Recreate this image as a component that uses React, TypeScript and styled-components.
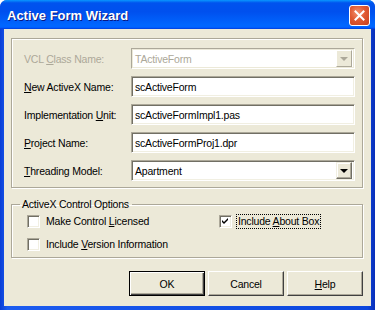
import React from "react";
import styled, { createGlobalStyle } from "styled-components";

const GlobalStyle = createGlobalStyle`
  html, body {
    margin: 0;
    padding: 0;
    background: #ffffff;
  }
  body {
    font-family: "Liberation Sans", Arial, sans-serif;
    font-size: 10.5px;
    letter-spacing: -0.2px;
    color: #000;
  }
`;

const Window = styled.div`
  width: 375px;
  height: 310px;
  display: flex;
  flex-direction: column;
  background: linear-gradient(to right, #0a3ed6 0%, #1c5cf0 2%, #0b46dd 98%, #0a2fb8 100%);
  border-radius: 7px 7px 0 0;
  overflow: hidden;
`;

const TitleBar = styled.div`
  height: 29px;
  flex: none;
  display: flex;
  align-items: center;
  justify-content: space-between;
  padding: 0 5px 0 7px;
  background: linear-gradient(
    to bottom,
    #0997ff 0%,
    #0053ee 10%,
    #0050ee 40%,
    #0066ff 86%,
    #0066ff 92%,
    #005bff 95%,
    #003dd7 100%
  );
`;

const Title = styled.span`
  font-family: "Liberation Sans", Arial, sans-serif;
  font-weight: bold;
  font-size: 13px;
  letter-spacing: 0;
  color: #fff;
  text-shadow: 1px 1px 0 #0a1883;
  margin-top: 1px;
`;

const CloseButton = styled.div`
  width: 19px;
  height: 19px;
  border: 1px solid #fff;
  border-radius: 3px;
  background: radial-gradient(circle at 40% 35%, #f3926f 0%, #e05a33 45%, #c8401c 100%);
  display: flex;
  align-items: center;
  justify-content: center;
  margin-top: 1px;
`;

const Body = styled.div`
  flex: 1;
  margin: 0 4px 4px 4px;
  background: #ece9d8;
  padding: 9px 8px 0 7px;
  display: flex;
  flex-direction: column;
`;

const GroupBox = styled.div`
  box-sizing: border-box;
  border: 1px solid #aca899;
  box-shadow: inset 1px 1px 0 #fff, 1px 1px 0 #fff;
  height: 150px;
  padding: 9px 7px 0 12px;
  display: grid;
  grid-template-columns: 107px 1fr;
  grid-auto-rows: 21px;
  row-gap: 7px;
  align-items: center;
`;

const Label = styled.span<{ $disabled?: boolean }>`
  color: ${(p) => (p.$disabled ? "#aca899" : "#000")};
  white-space: nowrap;
`;

const Field = styled.div<{ $disabled?: boolean }>`
  height: 21px;
  box-sizing: border-box;
  background: #fff;
  border: 1px solid;
  border-color: #aca899 #fff #fff #aca899;
  box-shadow: ${(p) =>
    p.$disabled
      ? "inset 1px 1px 0 #ece9d8, inset -1px -1px 0 #ece9d8"
      : "inset 1px 1px 0 #716f64, inset -1px -1px 0 #f1efe2"};
  display: flex;
  align-items: center;
  padding: 0 2px 0 3px;
  color: ${(p) => (p.$disabled ? "#aca899" : "#000")};
`;

const FieldText = styled.span`
  flex: 1;
  white-space: nowrap;
`;

const DropButton = styled.div<{ $disabled?: boolean }>`
  width: 16px;
  height: 17px;
  box-sizing: border-box;
  background: #ece9d8;
  border: 1px solid;
  border-color: ${(p) => (p.$disabled ? "#fff #aca899 #aca899 #fff" : "#f1efe2 #716f64 #716f64 #f1efe2")};
  box-shadow: ${(p) => (p.$disabled ? "none" : "inset -1px -1px 0 #aca899, inset 1px 1px 0 #fff")};
  display: flex;
  align-items: center;
  justify-content: center;
`;

const Arrow = styled.div<{ $disabled?: boolean }>`
  width: 0;
  height: 0;
  border-left: 4px solid transparent;
  border-right: 4px solid transparent;
  border-top: 4px solid ${(p) => (p.$disabled ? "#aca899" : "#000")};
  margin-top: 1px;
`;

const OptionsBox = styled.fieldset`
  margin: 10px 0 0 0;
  padding: 5px 0 6px 15px;
  border: 1px solid #aca899;
  box-shadow: inset 1px 1px 0 #fff, 1px 1px 0 #fff;
  display: grid;
  grid-template-columns: 192px 1fr;
  row-gap: 10px;
  min-width: 0;
`;

const Legend = styled.legend`
  padding: 0 3px 0 2px;
  margin-left: -7px;
  line-height: 12px;
`;

const CheckRow = styled.div`
  display: flex;
  align-items: center;
  gap: 5px;
  height: 13px;
`;

const CheckBox = styled.div`
  width: 13px;
  height: 13px;
  box-sizing: border-box;
  background: #fff;
  border: 1px solid;
  border-color: #aca899 #fff #fff #aca899;
  box-shadow: inset 1px 1px 0 #716f64, inset -1px -1px 0 #f1efe2;
  display: flex;
  align-items: center;
  justify-content: center;
`;

const CheckLabel = styled.span<{ $focused?: boolean }>`
  padding: 0 1px;
  outline: ${(p) => (p.$focused ? "1px dotted #000" : "none")};
  line-height: 13px;
  white-space: nowrap;
`;

const ButtonRow = styled.div`
  display: flex;
  justify-content: flex-end;
  gap: 3px;
  margin-top: 13px;
`;

const Button = styled.div<{ $default?: boolean }>`
  width: 76px;
  height: 25px;
  box-sizing: border-box;
  background: #ece9d8;
  border: 1px solid;
  border-color: ${(p) => (p.$default ? "#000" : "#fff #404040 #404040 #fff")};
  box-shadow: ${(p) =>
    p.$default
      ? "inset 1px 1px 0 #fff, inset -1px -1px 0 #404040, inset -2px -2px 0 #aca899"
      : "inset -1px -1px 0 #aca899"};
  display: flex;
  align-items: center;
  justify-content: center;
`;

const U = styled.span`
  text-decoration: underline;
`;

const rows = [
  { label: <>VCL <U>C</U>lass Name:</>, value: "TActiveForm", combo: true, disabled: true },
  { label: <><U>N</U>ew ActiveX Name:</>, value: "scActiveForm" },
  { label: <>Implementation <U>U</U>nit:</>, value: "scActiveFormImpl1.pas" },
  { label: <><U>P</U>roject Name:</>, value: "scActiveFormProj1.dpr" },
  { label: <><U>T</U>hreading Model:</>, value: "Apartment", combo: true },
];

const Check = () => (
  <svg width="7" height="7" viewBox="0 0 7 7">
    <path d="M0 2 L2 4 L6 0 L6 2 L2 6 L0 4 Z" fill="#000" />
  </svg>
);

export default function App() {
  return (
    <>
      <GlobalStyle />
      <Window>
        <TitleBar>
          <Title>Active Form Wizard</Title>
          <CloseButton>
            <svg width="11" height="11" viewBox="0 0 11 11">
              <path d="M1.5 1.5 L9.5 9.5 M9.5 1.5 L1.5 9.5" stroke="#fff" strokeWidth="2" strokeLinecap="square" />
            </svg>
          </CloseButton>
        </TitleBar>
        <Body>
          <GroupBox>
            {rows.map((r, i) => (
              <React.Fragment key={i}>
                <Label $disabled={r.disabled}>{r.label}</Label>
                <Field $disabled={r.disabled}>
                  <FieldText>{r.value}</FieldText>
                  {r.combo && (
                    <DropButton $disabled={r.disabled}>
                      <Arrow $disabled={r.disabled} />
                    </DropButton>
                  )}
                </Field>
              </React.Fragment>
            ))}
          </GroupBox>
          <OptionsBox>
            <Legend>ActiveX Control Options</Legend>
            <CheckRow>
              <CheckBox />
              <CheckLabel>Make Control <U>L</U>icensed</CheckLabel>
            </CheckRow>
            <CheckRow>
              <CheckBox>
                <Check />
              </CheckBox>
              <CheckLabel $focused>Include <U>A</U>bout Box</CheckLabel>
            </CheckRow>
            <CheckRow>
              <CheckBox />
              <CheckLabel>Include <U>V</U>ersion Information</CheckLabel>
            </CheckRow>
          </OptionsBox>
          <ButtonRow>
            <Button $default>OK</Button>
            <Button>Cancel</Button>
            <Button><U>H</U>elp</Button>
          </ButtonRow>
        </Body>
      </Window>
    </>
  );
}
